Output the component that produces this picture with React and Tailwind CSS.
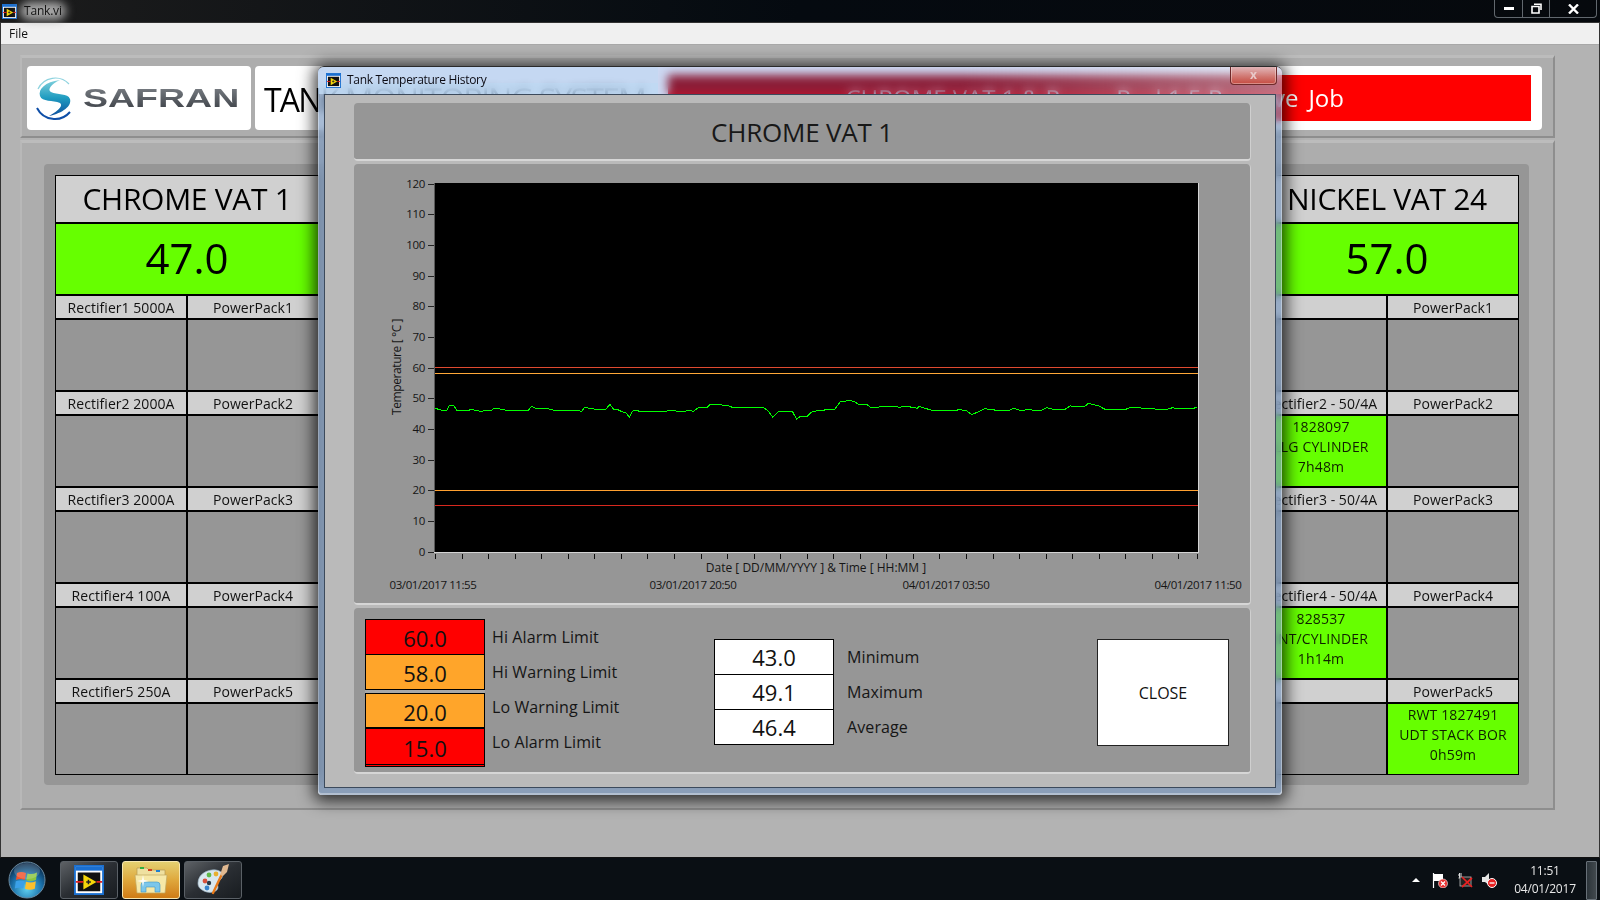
import React from "react";

const Lv = ({ s = 16 }) => (
  <svg width={s} height={s} viewBox="0 0 16 16" className="shrink-0">
    <rect x="0.5" y="0.5" width="15" height="15" fill="#fff" stroke="#1a6fd0" />
    <rect x="1" y="1" width="14" height="2" fill="#1a6fd0" />
    <rect x="2" y="4" width="12" height="10" fill="#111" />
    <path d="M5 5 L12 9 L5 13 Z" fill="#f5d60a" />
    <path d="M1 9 H5 M12 9 H15" stroke="#e02020" strokeWidth="1" />
    <path d="M6.5 9 H9 M7.7 7.8 V10.2" stroke="#222" strokeWidth="0.8" />
  </svg>
);

const Logo = () => (
  <svg width="42" height="46" viewBox="0 0 42 46" className="shrink-0">
    <defs>
      <linearGradient id="sw" x1="0" y1="0" x2="0" y2="1">
        <stop offset="0" stopColor="#7fd0dc" />
        <stop offset="0.5" stopColor="#1f9cc0" />
        <stop offset="1" stopColor="#0d4f9e" />
      </linearGradient>
    </defs>
    <path d="M5 14 A19 19 0 0 1 36 9" fill="none" stroke="#8fd3df" strokeWidth="1.2" />
    <path d="M4 33 A20 20 0 0 0 37 37" fill="none" stroke="#0f4fa8" strokeWidth="2" />
    <path d="M27 5 C12 7 5 14 7 21 C9 27 20 25 27 28 C30 30 27 35 16 41 C30 38 39 31 37 24 C35 18 24 20 18 17 C14 15 18 9 27 5 Z" fill="url(#sw)" />
  </svg>
);

const PanelBevel = "border-t-[3px] border-l-[2px] border-r-[2px] border-b-[2px] border-t-[#bcbcbc] border-l-[#b8b8b8] border-r-[#8e8e8e] border-b-[#8e8e8e]";

const rows = (L, R) => [0, 1, 2, 3, 4].map((i) => [L[i], R[i]]);

const Cell = ({ lines }) =>
  lines ? (
    <div className="h-[70px] bg-[#66ff00] flex flex-col items-center justify-start pt-[1px] text-[14px] leading-[20px] tracking-[0.15px] text-[#102000]">
      {lines.map((t) => (
        <div key={t} className="whitespace-nowrap">{t}</div>
      ))}
    </div>
  ) : (
    <div className="h-[70px] bg-[#969696]" />
  );

const Vat = ({ title, temp, labels, cells }) => (
  <div className="w-[264px] h-[600px] bg-black p-[1px] flex flex-col gap-[2px]">
    <div className="h-[46px] bg-[#d0d0d0] flex items-center justify-center pb-[1px] text-[30px] tracking-[-0.3px] text-black whitespace-nowrap">{title}</div>
    <div className="h-[70px] bg-[#66ff00] flex items-center justify-center pb-[3px] text-[42px] text-black">{temp}</div>
    <div className="grid grid-cols-2 gap-[2px]">
      {labels.map((r, i) => (
        <React.Fragment key={i}>
          <div className="h-[22px] bg-[#d0d0d0] flex items-center justify-center text-[14px] tracking-[0.05px] text-[#111] whitespace-nowrap">{r[0]}</div>
          <div className="h-[22px] bg-[#d0d0d0] flex items-center justify-center text-[14px] tracking-[0.05px] text-[#111] whitespace-nowrap">{r[1]}</div>
          <Cell lines={cells[i]?.[0]} />
          <Cell lines={cells[i]?.[1]} />
        </React.Fragment>
      ))}
    </div>
  </div>
);

const A = [166,205,185,211,200,211,207,197,222,198,230,211,265,211,272,209,283,210,300,214,335,211,342,205,355,206,378,211,445,211,455,199,467,205,505,206,522,211,585,211,605,214,613,203,625,204,660,210,678,207,690,193,700,207,712,208,725,215,738,218,748,232,757,214,765,211,780,214,800,214,806,216,880,212,895,214,915,214,925,211,940,214,957,202,965,204,980,203,990,193,1020,193,1030,197,1045,197,1057,202,1150,202,1165,213,1178,232,1195,215,1237,214,1250,238];
const B = [0,230,22,229,35,216,48,213,70,212,75,209,105,207,120,186,150,181,165,186,178,195,200,193,212,202,235,202,245,198,290,199,297,202,320,199,352,205,357,199,370,203,395,211,470,211,478,208,500,213,515,224,555,206,590,211,625,213,640,205,660,211,690,209,720,213,740,203,760,208,795,208,810,198,855,199,865,190,895,197,915,208,978,208,988,203,1020,203,1030,206,1100,208,1118,203,1130,206,1175,206,1192,202];
const pts = [];
for (let i = 0; i < A.length; i += 2) pts.push(`${(380 + A[i] / 3).toFixed(1)},${(340 + A[i + 1] / 3).toFixed(1)}`);
for (let i = 0; i < B.length; i += 2) pts.push(`${(800 + B[i] / 3).toFixed(1)},${(340 + B[i + 1] / 3).toFixed(1)}`);

const svgFont = "'Open Sans','Noto Sans',sans-serif";

const Chart = () => {
  const yt = [0, 10, 20, 30, 40, 50, 60, 70, 80, 90, 100, 110, 120];
  const xt = [];
  for (let i = 0; i <= 28; i++) xt.push(435 + i * 26.55);
  xt.push(1197);
  return (
    <svg width="897" height="441" viewBox="354 164 897 441" className="block" fontFamily={svgFont} fontSize="11.5" fill="#151515">
      <rect x="434" y="183" width="764" height="369" fill="#000" />
      <path d="M434.5 183 V552.5 H1198.5 V183" fill="none" stroke="#d4d4d4" strokeWidth="1" shapeRendering="crispEdges" />
      <path d="M434.5 183 V552" stroke="#5a5a5a" strokeWidth="1" shapeRendering="crispEdges" />
      {yt.map((v) => {
        const y = Math.round(551.7 - 3.067 * v) + 0.5;
        return (
          <g key={v}>
            <path d={`M428 ${y} H434`} stroke="#222" shapeRendering="crispEdges" />
            <text x="425" y={y + 3} textAnchor="end" letterSpacing="-0.3">{v}</text>
          </g>
        );
      })}
      {xt.map((x) => (
        <path key={x} d={`M${Math.round(x) + 0.5} 554 V559`} stroke="#111" shapeRendering="crispEdges" />
      ))}
      <path d="M435 367.5 H1198" stroke="#e04a30" shapeRendering="crispEdges" />
      <path d="M435 373.5 H1198" stroke="#ffa838" shapeRendering="crispEdges" />
      <path d="M435 490.5 H1198" stroke="#ffa030" shapeRendering="crispEdges" />
      <path d="M435 505.5 H1198" stroke="#d8281e" shapeRendering="crispEdges" />
      <polyline points={pts.join(" ")} fill="none" stroke="#00ff00" strokeWidth="1" shapeRendering="crispEdges" />
      <text transform="translate(401 367) rotate(-90)" textAnchor="middle" fontSize="12" letterSpacing="-0.4">Temperature [ °C ]</text>
      <text x="816" y="572" textAnchor="middle" fontSize="12">Date [ DD/MM/YYYY ] &amp; Time [ HH:MM ]</text>
      <text x="433" y="589" textAnchor="middle" letterSpacing="-0.4">03/01/2017 11:55</text>
      <text x="693" y="589" textAnchor="middle" letterSpacing="-0.4">03/01/2017 20:50</text>
      <text x="946" y="589" textAnchor="middle" letterSpacing="-0.4">04/01/2017 03:50</text>
      <text x="1198" y="589" textAnchor="middle" letterSpacing="-0.4">04/01/2017 11:50</text>
    </svg>
  );
};

const Limit = ({ v, c, h = "h-[34px]", cls = "pt-[2px]" }) => (
  <div className={`${h} ${c} ${cls} flex items-center justify-center text-[22px] text-[#111] leading-none`}>{v}</div>
);

const Section = ({ className = "", children }) => (
  <div className={`bg-[#969696] rounded-[4px] border-b-[2px] border-b-[#d6d6d6] border-r-[1px] border-r-[#cfcfcf] ${className}`}>{children}</div>
);

const Modal = () => (
  <div className="absolute left-[318px] top-[66px] w-[964px] h-[729px] rounded-t-[6px] rounded-b-[4px] shadow-[0_2px_16px_4px_rgba(0,0,0,0.75)] flex flex-col">
    <div className="h-[28px] relative rounded-t-[6px] border-t border-t-[#2a2a2a] bg-[rgba(0,60,190,0.2)] backdrop-blur-[5px] backdrop-saturate-[.6] flex items-center pl-[8px] gap-[6px] overflow-hidden">
      <div className="absolute inset-y-0 left-0 w-[340px] bg-[rgba(188,217,244,0.45)]" />
      <div className="absolute bottom-0 left-0 w-[340px] h-[11px] bg-[rgba(188,217,244,0.5)]" />
      <div className="absolute inset-y-0 right-0 w-[320px] bg-gradient-to-r from-transparent to-[rgba(255,255,255,0.38)]" />
      <span className="relative shrink-0 flex"><Lv s={15} /></span>
      <span className="relative -mt-[1px] text-[12px] tracking-[-0.3px] text-[#0c0c14] whitespace-nowrap">Tank Temperature History</span>
      <div className="absolute top-[-1px] right-[5px] w-[47px] h-[19px] rounded-b-[4px] border border-[#6e2a2a] border-t-0 shadow-[inset_0_0_0_1px_rgba(255,255,255,0.35)] bg-gradient-to-b from-[rgba(225,170,170,0.75)] to-[rgba(200,70,55,0.85)] flex items-center justify-center text-[#e8c8c8] text-[12px] font-bold leading-none">x</div>
    </div>
    <div className="flex-1 min-h-0 px-[6px] pb-[7px] bg-[rgba(120,150,190,0.65)] backdrop-blur-[3px] rounded-b-[4px] shadow-[inset_0_-2px_0_rgba(255,255,255,0.35),inset_1px_0_0_rgba(255,255,255,0.35),inset_-1px_0_0_rgba(255,255,255,0.35)]">
      <div className="h-full bg-[#bababa] border border-[#3c4a5c] pl-[29px] pr-[24px] pt-[8px] flex flex-col gap-[3px]">
        <Section className="h-[58px] shrink-0 flex items-center justify-center pt-[3px] text-[26px] text-[#181818] tracking-[-0.2px]">CHROME VAT 1</Section>
        <Section className="h-[441px] shrink-0 overflow-hidden"><Chart /></Section>
        <Section className="h-[166px] shrink-0 flex items-start pl-[11px] pt-[11px]">
          <div className="w-[120px] h-[148px] bg-black p-[1px] flex flex-col gap-[1px] shrink-0">
            <Limit v="60.0" c="bg-[#ff0000]" />
            <Limit v="58.0" c="bg-[#ffa52a]" />
            <div className="h-[3px] bg-[#a8a8a8] -mx-[1px] shrink-0" />
            <Limit v="20.0" c="bg-[#ffa52a]" cls="pt-[3px]" />
            <Limit v="15.0" c="bg-[#ff0000] mt-[1px]" h="h-[35px]" cls="pt-[2px]" />
            <div className="h-[1px] bg-[#ff0000] shrink-0" />
          </div>
          <div className="w-[229px] shrink-0 pl-[7px] pt-[1px] flex flex-col text-[16px] tracking-[0.1px] text-[#151515]">
            {["Hi Alarm Limit", "Hi Warning Limit", "Lo Warning Limit", "Lo Alarm Limit"].map((t) => (
              <div key={t} className="h-[35px] leading-[35px] whitespace-nowrap">{t}</div>
            ))}
          </div>
          <div className="w-[120px] h-[106px] mt-[20px] bg-black p-[1px] flex flex-col gap-[1px] shrink-0">
            {["43.0", "49.1", "46.4"].map((t) => (
              <div key={t} className="flex-1 bg-white flex items-center justify-center text-[22px] text-[#111] leading-none">{t}</div>
            ))}
          </div>
          <div className="w-[263px] mt-[21px] shrink-0 pl-[13px] flex flex-col text-[16px] tracking-[0.1px] text-[#151515]">
            {["Minimum", "Maximum", "Average"].map((t) => (
              <div key={t} className="h-[35px] leading-[35px]">{t}</div>
            ))}
          </div>
          <div className="w-[132px] h-[107px] mt-[20px] shrink-0 bg-white border border-[#222] flex items-center justify-center text-[16px] text-[#111]">CLOSE</div>
        </Section>
      </div>
    </div>
  </div>
);

const Orb = () => (
  <svg width="38" height="38" viewBox="0 0 38 38">
    <defs>
      <radialGradient id="orb" cx="0.5" cy="0.75" r="0.7">
        <stop offset="0" stopColor="#5fd0f0" />
        <stop offset="0.6" stopColor="#1a6fa8" />
        <stop offset="1" stopColor="#0a2a4a" />
      </radialGradient>
    </defs>
    <circle cx="19" cy="19" r="18" fill="url(#orb)" stroke="#6a8aa0" />
    <path d="M9 12 Q13 10 18 12 L16.8 19 Q12 17 8 19 Z" fill="#f0512a" />
    <path d="M19.5 12.5 Q24 14 29 11.5 L28 19 Q23 21 18.3 19.3 Z" fill="#8cc63f" />
    <path d="M7.8 20.3 Q12 18.5 16.5 20.3 L15.3 27.5 Q11 25.8 6.8 27.5 Z" fill="#3aa0e8" />
    <path d="M18 20.7 Q23 22.5 27.8 20.3 L26.8 27.8 Q22 29.5 17 27.8 Z" fill="#fbc02d" />
    <ellipse cx="19" cy="10" rx="13" ry="8" fill="#fff" opacity="0.18" />
  </svg>
);

const Folder = () => (
  <svg width="34" height="30" viewBox="0 0 34 30">
    <path d="M3 3 H13 L15 5 H31 V25 H3 Z" fill="#efe0a0" stroke="#b59a50" strokeWidth="0.7" />
    <rect x="6" y="2" width="4" height="2" fill="#30b040" />
    <rect x="14" y="4" width="4" height="2" fill="#d04020" />
    <rect x="22" y="5" width="4" height="2" fill="#2080d0" />
    <path d="M1 10 H33 L31 28 H3 Z" fill="#f6e8a8" stroke="#c0a860" strokeWidth="0.7" />
    <path d="M7 27 V20 Q7 17 10 17 H23 Q26 17 26 20 V27 H21 V22 H12 V27 Z" fill="#7cc6ea" stroke="#3f94c4" strokeWidth="0.6" />
    <path d="M9 10 L10 15 L15 16 L10 17 L9 22 L8 17 L3 16 L8 15 Z" fill="#fff" opacity="0.9" />
  </svg>
);

const Palette = () => (
  <svg width="34" height="34" viewBox="0 0 34 34">
    <path d="M2 20 C2 11 12 6 20 7 C27 8 28 13 25 16 C22 18 21 21 22 24 C22 29 14 31 8 28 C4 26 2 24 2 20 Z" fill="#d9e7ef" stroke="#9db4c4" strokeWidth="0.7" />
    <circle cx="9" cy="18" r="2.4" fill="#d8503a" />
    <circle cx="13" cy="12" r="2.4" fill="#5fb848" />
    <circle cx="20" cy="11" r="2.4" fill="#e8b030" />
    <circle cx="13" cy="20" r="2.2" fill="#2b3a48" />
    <circle cx="11" cy="25" r="2.4" fill="#3a84cc" />
    <path d="M17 30 L26 11" stroke="#e87a1a" strokeWidth="2.4" strokeLinecap="round" />
    <path d="M24 12 L27 3 L33 1 L31 9 L27 13 Z" fill="#e0b890" />
  </svg>
);

const TaskBtn = ({ active, children }) => (
  <div className={`w-[58px] h-[38px] rounded-[3px] border flex items-center justify-center ${active ? "border-[#f6e6b0] bg-gradient-to-b from-[#e4d070] via-[#dfa83c] to-[#cf7c14]" : "border-[#5a6066] bg-gradient-to-br from-[#5e6266] via-[#2a2e33] to-[#181c20]"}`}>
    {children}
  </div>
);

const Tray = () => (
  <div className="flex items-center h-full ml-auto text-white">
    <div className="w-0 h-0 border-x-[4px] border-x-transparent border-b-[4px] border-b-white mr-[12px]" />
    <svg width="16" height="16" viewBox="0 0 16 16" className="mr-[9px]">
      <path d="M1.5 1 V16" stroke="#fff" strokeWidth="1.2" />
      <path d="M2 2 H11 V9 H2 Z" fill="#fff" />
      <circle cx="11" cy="11.5" r="4.5" fill="#e83030" stroke="#fff" strokeWidth="0.6" />
      <path d="M9 9.5 L13 13.5 M13 9.5 L9 13.5" stroke="#fff" strokeWidth="1.2" />
    </svg>
    <svg width="16" height="16" viewBox="0 0 16 16" className="mr-[8px]">
      <path d="M1 3 H2.5 M2.5 1 V6 M4 1 V6 M1.5 6 H5" stroke="#ddd" strokeWidth="1" fill="none" />
      <rect x="3" y="5" width="11" height="9" fill="#222" stroke="#bbb" strokeWidth="0.8" />
      <path d="M5 5 L15 15 M15 6 L5 15" stroke="#e82020" strokeWidth="1.7" />
    </svg>
    <svg width="16" height="16" viewBox="0 0 16 16" className="mr-[17px]">
      <path d="M1 5 H4 L8 1 V13 L4 10 H1 Z" fill="#e6e6e6" />
      <circle cx="11" cy="11" r="4.5" fill="#e82020" stroke="#fff" strokeWidth="1" />
      <path d="M8.5 11 H13.5" stroke="#fff" strokeWidth="1.3" />
    </svg>
    <div className="w-[62px] text-center text-[12px] leading-[18px] tracking-[-0.2px] text-[#e8e8e8]">
      <div>11:51</div>
      <div className="whitespace-nowrap">04/01/2017</div>
    </div>
    <div className="ml-[10px] mr-[3px] w-[11px] h-[39px] border border-[#687078] rounded-[1px] bg-gradient-to-r from-[#2c343a] to-[#42494e]" />
  </div>
);

export default function App() {
  const leftLabels = rows(
    ["Rectifier1 5000A", "Rectifier2 2000A", "Rectifier3 2000A", "Rectifier4 100A", "Rectifier5 250A"],
    ["PowerPack1", "PowerPack2", "PowerPack3", "PowerPack4", "PowerPack5"]
  );
  const rightLabels = rows(
    ["", "Rectifier2 - 50/4A", "Rectifier3 - 50/4A", "Rectifier4 - 50/4A", ""],
    ["PowerPack1", "PowerPack2", "PowerPack3", "PowerPack4", "PowerPack5"]
  );
  const rightCells = [
    [null, null],
    [["1828097", "LLG CYLINDER", "7h48m"], null],
    [null, null],
    [["828537", "INT/CYLINDER", "1h14m"], null],
    [null, ["RWT 1827491", "UDT STACK BOR", "0h59m"]],
  ];
  return (
    <div className="relative w-[1600px] h-[900px] overflow-hidden flex flex-col bg-black font-['Open_Sans','Noto_Sans',sans-serif]">
      {/* title bar */}
      <div className="h-[22px] shrink-0 relative bg-gradient-to-r from-[#1c1c1c] via-[#050a10] to-[#06090d] flex items-center pl-[2px] gap-[7px]">
        <Lv s={15} />
        <span className="relative text-[12px] tracking-[-0.2px] text-[#111]">
          <span className="absolute -inset-x-[4px] inset-y-0 bg-[#a8a8a8] blur-[5px] rounded-full" />
          <span className="relative">Tank.vi</span>
        </span>
        <div className="ml-auto mr-[3px] self-start h-[18px] flex rounded-b-[4px] border border-t-0 border-[#62686e] text-white">
          <div className="w-[28px] flex items-center justify-center border-r border-[#62686e]"><div className="w-[10px] h-[3px] bg-white" /></div>
          <div className="w-[27px] flex items-center justify-center border-r border-[#62686e]">
            <svg width="11" height="11" viewBox="0 0 11 11"><path d="M3 1.2 H10 V7 M1 3.5 H8 V10 H1 Z" fill="none" stroke="#fff" strokeWidth="1.6" /></svg>
          </div>
          <div className="w-[46px] flex items-center justify-center">
            <svg width="11" height="10" viewBox="0 0 11 10"><path d="M1 0.5 L10 9.5 M10 0.5 L1 9.5" stroke="#fff" strokeWidth="2.4" /></svg>
          </div>
        </div>
      </div>
      {/* window client */}
      <div className="flex-1 min-h-0 flex flex-col bg-[#b3b3b3] border border-[#333] border-b-[#111]">
        <div className="h-[22px] shrink-0 bg-[#f0f0f0] border-b border-[#a8a8a8] pl-[8px] flex items-center text-[12px] text-[#111]">File</div>
        <div className="flex-1 pt-[10px] pl-[19px] pr-[44px] flex flex-col gap-[2px]">
          {/* header panel */}
          <div className={`h-[83px] shrink-0 bg-[#adadad] ${PanelBevel} pl-[5px] pr-[11px] pt-[8px] flex gap-[4px]`}>
            <div className="w-[224px] h-[64px] bg-white rounded-[4px] flex items-center pl-[6px] gap-[8px] overflow-hidden">
              <Logo />
              <span className="origin-left scale-x-[1.5] font-['Liberation_Sans',sans-serif] font-bold text-[25px] leading-none bg-gradient-to-b from-[#7b8086] to-[#3c4046] bg-clip-text text-transparent">SAFRAN</span>
            </div>
            <div className="flex-1 h-[64px] bg-white rounded-[4px] flex items-center pl-[9px] pr-[11px] overflow-hidden">
              <span className="w-[404px] h-[28px] leading-[28px] mt-[4px] shrink-0 text-[32px] tracking-[-1.8px] text-black whitespace-nowrap">TANK MONITORING SYSTEM</span>
              <div className="flex-1 h-[46px] bg-[#ff0000] flex items-center justify-end pr-[187px] text-white text-[24px] leading-none whitespace-nowrap">
                <span>CHROME VAT 1 &amp; PowerPack1 5 Remove</span>
                <span className="ml-[10px]">Job</span>
              </div>
            </div>
          </div>
          {/* vats panel */}
          <div className={`h-[670px] shrink-0 bg-[#adadad] ${PanelBevel} pl-[22px] pr-[24px] pt-[21px]`}>
            <div className="h-[621px] bg-[#969696] rounded-[4px] pl-[11px] pr-[10px] pt-[11px] flex justify-between">
              <Vat title="CHROME VAT 1" temp="47.0" labels={leftLabels} cells={[]} />
              <Vat title="NICKEL VAT 24" temp="57.0" labels={rightLabels} cells={rightCells} />
            </div>
          </div>
        </div>
      </div>
      {/* taskbar */}
      <div className="h-[42px] shrink-0 bg-[#0a0f14] flex items-center pt-[2px]">
        <div className="ml-[8px] mr-[14px]"><Orb /></div>
        <div className="flex gap-[4px]">
          <TaskBtn><Lv s={30} /></TaskBtn>
          <TaskBtn active><Folder /></TaskBtn>
          <TaskBtn><Palette /></TaskBtn>
        </div>
        <Tray />
      </div>
      <Modal />
    </div>
  );
}
